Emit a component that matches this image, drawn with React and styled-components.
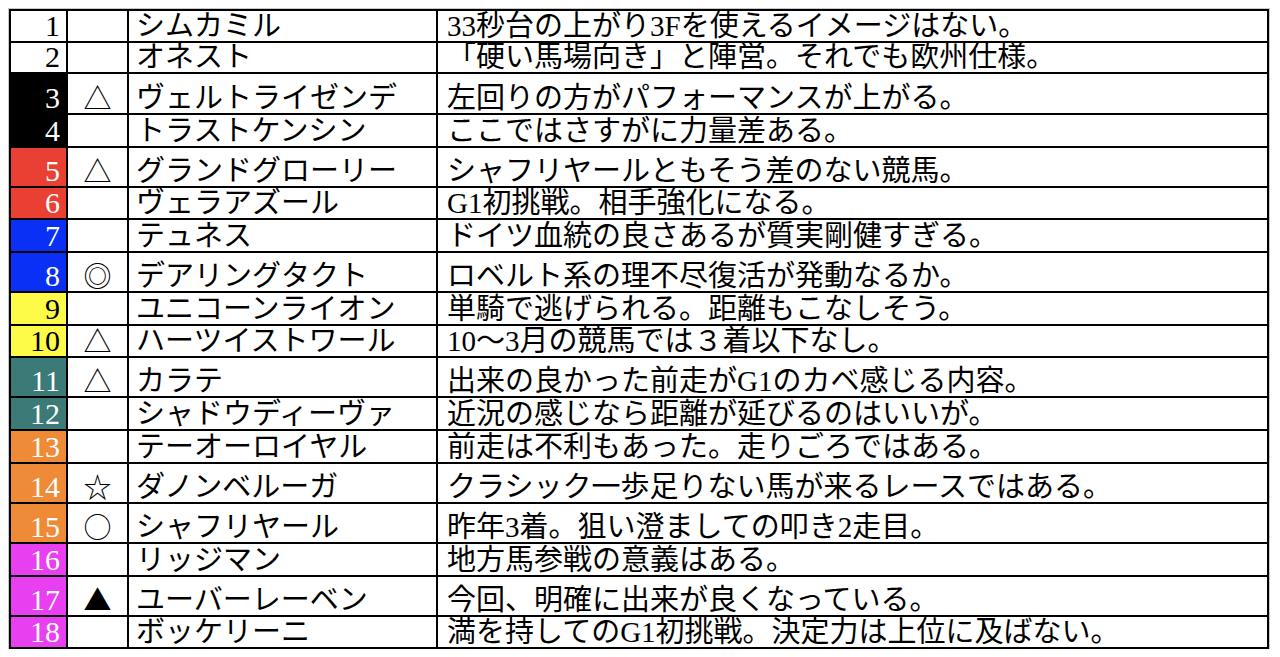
import styled, { createGlobalStyle } from "styled-components";

const GlobalStyle = createGlobalStyle`
  html, body {
    margin: 0;
    padding: 0;
    background: #fff;
  }
`;

const FRAME = {
  black: "#000000",
  red: "#ea4033",
  blue: "#0a30f6",
  yellow: "#fefb48",
  teal: "#3b7a77",
  orange: "#ef8a37",
  magenta: "#e83ff0",
};

// 行の高さは元画像の罫線位置から
const horses = [
  { no: 1, frame: null, h: 32, name: "シムカミル", note: "33秒台の上がり3Fを使えるイメージはない。" },
  { no: 2, frame: null, h: 31, name: "オネスト", note: "「硬い馬場向き」と陣営。それでも欧州仕様。" },
  { no: 3, frame: "black", h: 41, mark: "△", name: "ヴェルトライゼンデ", note: "左回りの方がパフォーマンスが上がる。" },
  { no: 4, frame: "black", h: 33, name: "トラストケンシン", note: "ここではさすがに力量差ある。" },
  { no: 5, frame: "red", h: 40, mark: "△", name: "グランドグローリー", note: "シャフリヤールともそう差のない競馬。" },
  { no: 6, frame: "red", h: 32, name: "ヴェラアズール", note: "G1初挑戦。相手強化になる。" },
  { no: 7, frame: "blue", h: 33, name: "テュネス", note: "ドイツ血統の良さあるが質実剛健すぎる。" },
  { no: 8, frame: "blue", h: 40, mark: "◎", name: "デアリングタクト", note: "ロベルト系の理不尽復活が発動なるか。" },
  { no: 9, frame: "yellow", h: 33, name: "ユニコーンライオン", note: "単騎で逃げられる。距離もこなしそう。" },
  { no: 10, frame: "yellow", h: 32, mark: "△", name: "ハーツイストワール", note: "10～3月の競馬では３着以下なし。" },
  { no: 11, frame: "teal", h: 40, mark: "△", name: "カラテ", note: "出来の良かった前走がG1のカベ感じる内容。" },
  { no: 12, frame: "teal", h: 33, name: "シャドウディーヴァ", note: "近況の感じなら距離が延びるのはいいが。" },
  { no: 13, frame: "orange", h: 33, name: "テーオーロイヤル", note: "前走は不利もあった。走りごろではある。" },
  { no: 14, frame: "orange", h: 40, mark: "☆", name: "ダノンベルーガ", note: "クラシック一歩足りない馬が来るレースではある。" },
  { no: 15, frame: "orange", h: 40, mark: "○", name: "シャフリヤール", note: "昨年3着。狙い澄ましての叩き2走目。" },
  { no: 16, frame: "magenta", h: 33, name: "リッジマン", note: "地方馬参戦の意義はある。" },
  { no: 17, frame: "magenta", h: 40, mark: "▲", name: "ユーバーレーベン", note: "今回、明確に出来が良くなっている。" },
  { no: 18, frame: "magenta", h: 32, name: "ボッケリーニ", note: "満を持してのG1初挑戦。決定力は上位に及ばない。" },
];

const Sheet = styled.div`
  margin: 9px 0 0 9px;
  width: 1256px;
  display: grid;
  grid-template-columns: 55px 59px 307px 1fr;
  grid-template-rows: ${({ $rows }) => $rows.map((h) => `${h - 2}px`).join(" ")};
  gap: 2px;
  background: #000;
  border: 2px solid #000;
  box-shadow: 0 0 0 1px #c8c8c8;
  font-family: "Liberation Serif", "Noto Sans CJK JP", serif;
  font-size: 29px;
  color: #000;
`;

const Cell = styled.div`
  background: #fff;
  display: flex;
  align-items: flex-end;
  padding: 0 0 0 7px;
  line-height: 29px;
  white-space: nowrap;
`;

const NumCell = styled(Cell)`
  justify-content: flex-end;
  padding: 0 6px 2px 0;
  font-size: 30px;
  line-height: 27px;
  background: ${({ $frame }) => ($frame ? FRAME[$frame] : "#fff")};
  color: ${({ $frame }) => (!$frame || $frame === "yellow" ? "#000" : "#fff")};
`;

const MarkCell = styled(Cell)`
  justify-content: center;
  padding: 0 0 1px;
  font-family: "Noto Sans CJK JP", sans-serif;
  font-size: 28px;
`;

const NoteCell = styled(Cell)`
  padding-left: 9px;
`;

export default function App() {
  return (
    <>
      <GlobalStyle />
      <Sheet $rows={horses.map((r) => r.h)}>
        {horses.map((r) => [
          <NumCell key={`n${r.no}`} $frame={r.frame}>{r.no}</NumCell>,
          <MarkCell key={`m${r.no}`}>{r.mark || ""}</MarkCell>,
          <Cell key={`h${r.no}`}>{r.name}</Cell>,
          <NoteCell key={`c${r.no}`}>{r.note}</NoteCell>,
        ])}
      </Sheet>
    </>
  );
}
